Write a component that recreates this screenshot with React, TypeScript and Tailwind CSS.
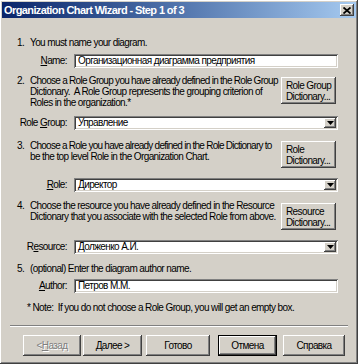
import React from "react";

const raised =
  "shadow-[inset_-1px_-1px_#404040,inset_1px_1px_#ffffff,inset_-2px_-2px_#808080,inset_2px_2px_#d4d0c8]";
const sunken =
  "shadow-[inset_1px_1px_#808080,inset_-1px_-1px_#ffffff,inset_2px_2px_#404040,inset_-2px_-2px_#d4d0c8]";

function U({ children }: { children: React.ReactNode }) {
  return <span className="underline underline-offset-[1px]">{children}</span>;
}

function Label({ children }: { children: React.ReactNode }) {
  return <div className="w-[66px] shrink-0 text-right pr-[1px] leading-[14px]">{children}</div>;
}

function TextBox({ value }: { value: string }) {
  return (
    <div className={`ml-[6px] w-[264px] h-[14px] bg-white ${sunken} px-[4px] leading-[14px] whitespace-nowrap overflow-hidden`}>
      {value}
    </div>
  );
}

function Combo({ value }: { value: string }) {
  return (
    <div className={`ml-[6px] w-[264px] h-[14px] bg-white ${sunken} flex items-center p-[2px]`}>
      <div className="flex-1 px-[2px] leading-[10px] whitespace-nowrap overflow-hidden">{value}</div>
      <div className={`w-[12px] h-[10px] bg-[#d4d0c8] ${raised} flex items-center justify-center`}>
        <svg width="7" height="4" viewBox="0 0 7 4">
          <path d="M0 0h7L3.5 4z" fill="#000" />
        </svg>
      </div>
    </div>
  );
}

function DictButton({ lines, mt }: { lines: string[]; mt: string }) {
  return (
    <div className={`${mt} w-[55px] h-[27px] shrink-0 bg-[#d4d0c8] ${raised} flex flex-col justify-center pl-[5px] leading-[11px] whitespace-nowrap`}>
      {lines.map((l) => (
        <div key={l}>{l}</div>
      ))}
    </div>
  );
}

function Step({ n, children }: { n: string; children: React.ReactNode }) {
  return (
    <div className="flex w-[264px] shrink-0 leading-[11px] whitespace-nowrap">
      <div className="w-[13px] shrink-0">{n}</div>
      <div>{children}</div>
    </div>
  );
}

function BottomButton({
  children,
  w,
  ml,
  disabled,
  def,
}: {
  children: React.ReactNode;
  w: string;
  ml: string;
  disabled?: boolean;
  def?: boolean;
}) {
  return (
    <div
      className={`${w} ${ml} h-[21px] bg-[#d4d0c8] flex items-center justify-center ${
        def
          ? "shadow-[inset_1px_1px_#000,inset_-1px_-1px_#000,inset_-2px_-2px_#404040,inset_2px_2px_#ffffff,inset_-3px_-3px_#808080]"
          : raised
      } ${disabled ? "text-[#808080] [text-shadow:1px_1px_0_#ffffff]" : "text-black"}`}
    >
      {children}
    </div>
  );
}

export default function App() {
  return (
    <div
      className={`w-[358px] h-[364px] bg-[#d4d0c8] p-[2px] flex flex-col text-[10px] tracking-[-0.6px] text-black ${raised}`}
      style={{ fontFamily: '"Liberation Sans", Arial, sans-serif' }}
    >
      {/* Title bar */}
      <div className="h-[16px] shrink-0 bg-gradient-to-r from-[#0a246a] to-[#a6caf0] flex items-center pl-[2px] pr-[2px]">
        <div className="flex-1 text-white font-bold text-[11px] tracking-[-0.6px] leading-[16px] whitespace-nowrap">
          Organization Chart Wizard - Step 1 of 3
        </div>
        <div className={`w-[14px] h-[12px] bg-[#d4d0c8] ${raised} flex items-center justify-center`}>
          <svg width="8" height="7" viewBox="0 0 8 7">
            <path d="M0.5 0.5L7.5 6.5M7.5 0.5L0.5 6.5" stroke="#000" strokeWidth="1.8" />
          </svg>
        </div>
      </div>

      <div className="flex flex-col pl-[15px]">
        {/* 1 */}
        <div className="mt-[19px]">
          <Step n="1.">You must name your diagram.</Step>
        </div>
        <div className="mt-[6px] flex -ml-[15px]">
          <Label>
            <U>N</U>ame:
          </Label>
          <TextBox value="Организационная диаграмма предприятия" />
        </div>

        {/* 2 */}
        <div className="mt-[7px] flex">
          <Step n="2.">
            <div className="tracking-[-0.72px]">Choose a Role Group you have already defined in the Role Group</div>
            <div>Dictionary.&nbsp; A Role Group represents the grouping criterion of</div>
            <div>Roles in the organization.*</div>
          </Step>
          <DictButton mt="mt-[2px]" lines={["Role Group", "Dictionary..."]} />
        </div>
        <div className="mt-[8px] flex -ml-[15px]">
          <Label>
            Role <U>G</U>roup:
          </Label>
          <Combo value="Управление" />
        </div>

        {/* 3 */}
        <div className="mt-[10px] flex">
          <Step n="3.">
            <div className="tracking-[-0.75px]">Choose a Role you have already defined in the Role Dictionary to</div>
            <div>be the top level Role in the Organization Chart.</div>
          </Step>
          <DictButton mt="mt-[1px]" lines={["Role", "Dictionary..."]} />
        </div>
        <div className="mt-[10px] flex -ml-[15px]">
          <Label>
            <U>R</U>ole:
          </Label>
          <Combo value="Директор" />
        </div>

        {/* 4 */}
        <div className="mt-[8px] flex">
          <Step n="4.">
            <div>Choose the resource you have already defined in the Resource</div>
            <div>Dictionary that you associate with the selected Role from above.</div>
          </Step>
          <DictButton mt="mt-[3px]" lines={["Resource", "Dictionary..."]} />
        </div>
        <div className="mt-[10px] flex -ml-[15px]">
          <Label>
            R<U>e</U>source:
          </Label>
          <Combo value="Долженко А.И." />
        </div>

        {/* 5 */}
        <div className="mt-[9px]">
          <Step n="5.">(optional) Enter the diagram author name.</Step>
        </div>
        <div className="mt-[5px] flex -ml-[15px]">
          <Label>
            <U>A</U>uthor:
          </Label>
          <TextBox value="Петров М.М." />
        </div>
        <div className="mt-[9px] pl-[10px] leading-[11px] whitespace-nowrap">
          * Note:&nbsp; If you do not choose a Role Group, you will get an empty box.
        </div>
      </div>

      {/* separator */}
      <div className="mt-[12px] mx-[8px] h-[2px] border-t border-t-[#808080] border-b border-b-white" />

      {/* buttons */}
      <div className="mt-[8px] flex">
        <BottomButton w="w-[58px]" ml="ml-[21px]" disabled>
          &lt; <U>Н</U>азад
        </BottomButton>
        <BottomButton w="w-[59px]" ml="ml-[2px]">
          Далее &gt;
        </BottomButton>
        <BottomButton w="w-[64px]" ml="ml-[4px]">
          Готово
        </BottomButton>
        <BottomButton w="w-[59px]" ml="ml-[8px]" def>
          Отмена
        </BottomButton>
        <BottomButton w="w-[62px]" ml="ml-[6px]">
          Справка
        </BottomButton>
      </div>
    </div>
  );
}
